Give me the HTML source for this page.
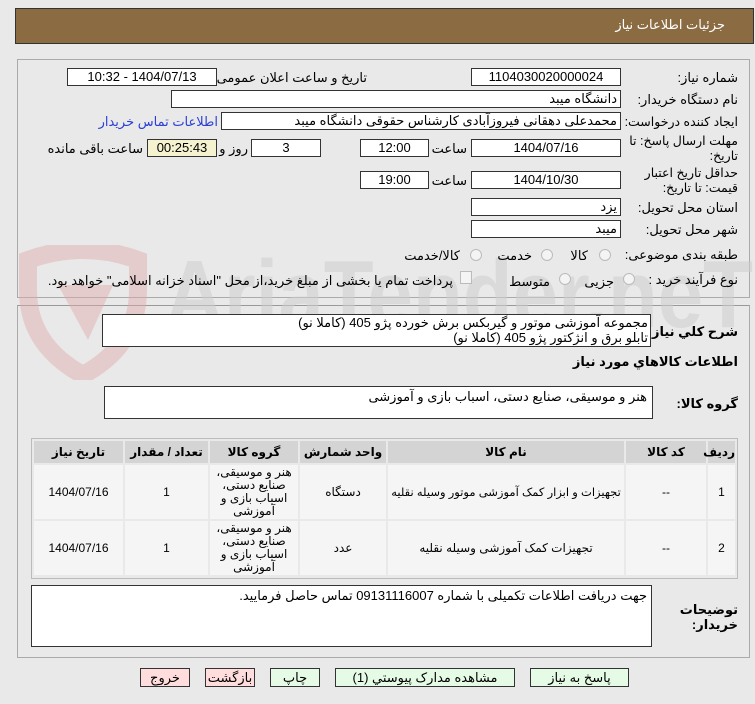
<!DOCTYPE html>
<html><head><meta charset="utf-8"><style>
*{box-sizing:border-box;margin:0;padding:0}
body{width:755px;height:704px;background:#e9e9e9;font-family:"Liberation Sans","DejaVu Sans",sans-serif;font-size:12px;color:#000;position:relative;overflow:hidden}
.a{position:absolute}
.box{position:absolute;background:#fff;border:1px solid #333;height:18px;line-height:16px;font-size:13px;text-align:center;direction:rtl;white-space:nowrap;overflow:hidden}
.lbl{position:absolute;direction:rtl;text-align:right;white-space:nowrap;font-size:13px}
.rad{position:absolute;width:12px;height:12px;border:1px solid #bbb;border-radius:50%;background:#f4f4f4}
.btn{position:absolute;top:668px;height:19px;border:1px solid #333;text-align:center;line-height:17px;font-size:13px;direction:rtl;background:#e6fbe6}
table{border-collapse:separate;border-spacing:2px;direction:rtl;table-layout:fixed}
td,th{text-align:center;font-size:12px}
th{background:#d4d4d4;height:22px;font-weight:bold}
td{background:#f5f5f5}
</style></head><body>
<div class="a" style="left:15px;top:8px;width:739px;height:36px;background:#8b6b42;border:1px solid #333"></div>
<div class="lbl" style="right:30px;top:17px;color:#fff;font-size:13px">جزئیات اطلاعات نیاز</div>

<div class="a" style="left:17px;top:59px;width:733px;height:239px;border:1px solid #aaa;background:#e9e9e9"></div>
<div class="a" style="left:17px;top:305px;width:733px;height:353px;border:1px solid #aaa;border-top:1px solid #999;background:#e9e9e9"></div>

<!-- watermark -->
<div class="a" style="left:165px;top:240px;font-size:96px;font-weight:bold;color:#cfcfcf;opacity:.55;white-space:nowrap;line-height:110px;transform:scaleX(.85);transform-origin:left">AriaTender.neT</div>
<svg class="a" style="left:18px;top:245px;opacity:.45" width="130" height="135"><path d="M10 15 Q65 -5 120 15 L120 45 Q120 100 65 130 Q10 100 10 45Z" fill="none" stroke="#e2a9a9" stroke-width="18"/><path d="M40 40 L95 40 L70 95Z" fill="#e2a9a9"/></svg>

<div class="lbl" style="right:17px;top:70px">شماره نیاز:</div>
<div class="box" style="left:471px;top:68px;width:150px">1104030020000024</div>
<div class="lbl" style="right:388px;top:70px">تاریخ و ساعت اعلان عمومی:</div>
<div class="box" style="left:67px;top:68px;width:150px">1404/07/13 - 10:32</div>

<div class="lbl" style="right:17px;top:92px">نام دستگاه خریدار:</div>
<div class="box" style="left:171px;top:90px;width:450px;text-align:right;padding-right:3px">دانشگاه میبد</div>

<div class="lbl" style="right:17px;top:114px;font-size:12.5px">ایجاد کننده درخواست:</div>
<div class="box" style="left:221px;top:112px;width:400px;text-align:right;padding-right:3px">محمدعلی دهقانی فیروزآبادی کارشناس حقوقی دانشگاه میبد</div>
<div class="lbl" style="right:537px;top:114px;color:#2a3fd6">اطلاعات تماس خریدار</div>

<div class="lbl" style="right:17px;top:134px;line-height:15px;font-size:12.5px">مهلت ارسال پاسخ: تا<br>تاریخ:</div>
<div class="box" style="left:471px;top:139px;width:150px">1404/07/16</div>
<div class="lbl" style="right:288px;top:141px">ساعت</div>
<div class="box" style="left:360px;top:139px;width:69px">12:00</div>
<div class="box" style="left:251px;top:139px;width:70px">3</div>
<div class="lbl" style="right:507px;top:141px">روز و</div>
<div class="box" style="left:147px;top:139px;width:70px;background:#f5f2cf">00:25:43</div>
<div class="lbl" style="right:612px;top:141px">ساعت باقی مانده</div>

<div class="lbl" style="right:17px;top:166px;line-height:15px;font-size:12.5px">حداقل تاریخ اعتبار<br>قیمت: تا تاریخ:</div>
<div class="box" style="left:471px;top:171px;width:150px">1404/10/30</div>
<div class="lbl" style="right:288px;top:173px">ساعت</div>
<div class="box" style="left:360px;top:171px;width:69px">19:00</div>

<div class="lbl" style="right:17px;top:200px">استان محل تحویل:</div>
<div class="box" style="left:471px;top:198px;width:150px;text-align:right;padding-right:3px">یزد</div>
<div class="lbl" style="right:17px;top:222px">شهر محل تحویل:</div>
<div class="box" style="left:471px;top:220px;width:150px;text-align:right;padding-right:3px">میبد</div>

<div class="lbl" style="right:17px;top:247px">طبقه بندی موضوعی:</div>
<div class="rad" style="left:599px;top:249px"></div><div class="lbl" style="right:167px;top:248px">کالا</div>
<div class="rad" style="left:541px;top:249px"></div><div class="lbl" style="right:223px;top:248px">خدمت</div>
<div class="rad" style="left:470px;top:249px"></div><div class="lbl" style="right:295px;top:248px">کالا/خدمت</div>

<div class="lbl" style="right:17px;top:272px">نوع فرآیند خرید :</div>
<div class="rad" style="left:623px;top:273px"></div><div class="lbl" style="right:141px;top:274px">جزیی</div>
<div class="rad" style="left:559px;top:273px"></div><div class="lbl" style="right:205px;top:274px">متوسط</div>
<div class="a" style="left:460px;top:271px;width:12px;height:13px;border:1px solid #bbb;background:#f4f4f4"></div>
<div class="lbl" style="right:302px;top:273px">پرداخت تمام یا بخشی از مبلغ خرید،از محل "اسناد خزانه اسلامی" خواهد بود.</div>

<div class="lbl" style="right:17px;top:324px;font-weight:bold">شرح کلي نياز:</div>
<div class="box" style="left:102px;top:314px;width:549px;height:33px;text-align:right;padding-right:2px;line-height:15px;white-space:normal;background:#fff">مجموعه آموزشی موتور و گیربکس برش خورده پژو 405 (کاملا نو)<br>تابلو برق و انژکتور پژو  405 (کاملا نو)</div>
<div class="lbl" style="right:17px;top:354px;font-weight:bold">اطلاعات کالاهاي مورد نياز</div>
<div class="lbl" style="right:17px;top:396px;font-weight:bold">گروه کالا:</div>
<div class="box" style="left:104px;top:386px;width:549px;height:33px;text-align:right;padding:3px 5px;line-height:14px">هنر و موسیقی، صنایع دستی، اسباب بازی و آموزشی</div>

<div class="a" style="left:31px;top:438px;width:707px;height:141px;border:1px solid #bbb;background:#e9e9e9">
<table style="width:705px;position:absolute;left:0;top:0">
<tr><th style="width:27px">ردیف</th><th style="width:80px">کد کالا</th><th style="width:236px">نام کالا</th><th style="width:86px">واحد شمارش</th><th style="width:88px">گروه کالا</th><th style="width:83px">تعداد / مقدار</th><th>تاریخ نیاز</th></tr>
<tr style="height:54px"><td>1</td><td>--</td><td style="white-space:nowrap;font-size:11.5px">تجهیزات و ابزار کمک آموزشی موتور وسیله نقلیه</td><td>دستگاه</td><td style="line-height:13px">هنر و موسیقی،<br>صنایع دستی،<br>اسباب بازی و<br>آموزشی</td><td>1</td><td>1404/07/16</td></tr>
<tr style="height:54px"><td>2</td><td>--</td><td>تجهیزات کمک آموزشی وسیله نقلیه</td><td>عدد</td><td style="line-height:13px">هنر و موسیقی،<br>صنایع دستی،<br>اسباب بازی و<br>آموزشی</td><td>1</td><td>1404/07/16</td></tr>
</table></div>

<div class="lbl" style="right:17px;top:602px;font-weight:bold;line-height:15px">توضیحات<br>خریدار:</div>
<div class="box" style="left:31px;top:585px;width:621px;height:62px;text-align:right;padding:3px 4px;line-height:14px">جهت دریافت اطلاعات تکمیلی با شماره 09131116007 تماس حاصل فرمایید.</div>

<div class="btn" style="left:530px;width:99px">پاسخ به نیاز</div>
<div class="btn" style="left:335px;width:180px">مشاهده مدارک پیوستي (1)</div>
<div class="btn" style="left:270px;width:50px">چاپ</div>
<div class="btn" style="left:205px;width:50px;background:#fdd">بازگشت</div>
<div class="btn" style="left:140px;width:50px;background:#fdd">خروج</div>
</body></html>
